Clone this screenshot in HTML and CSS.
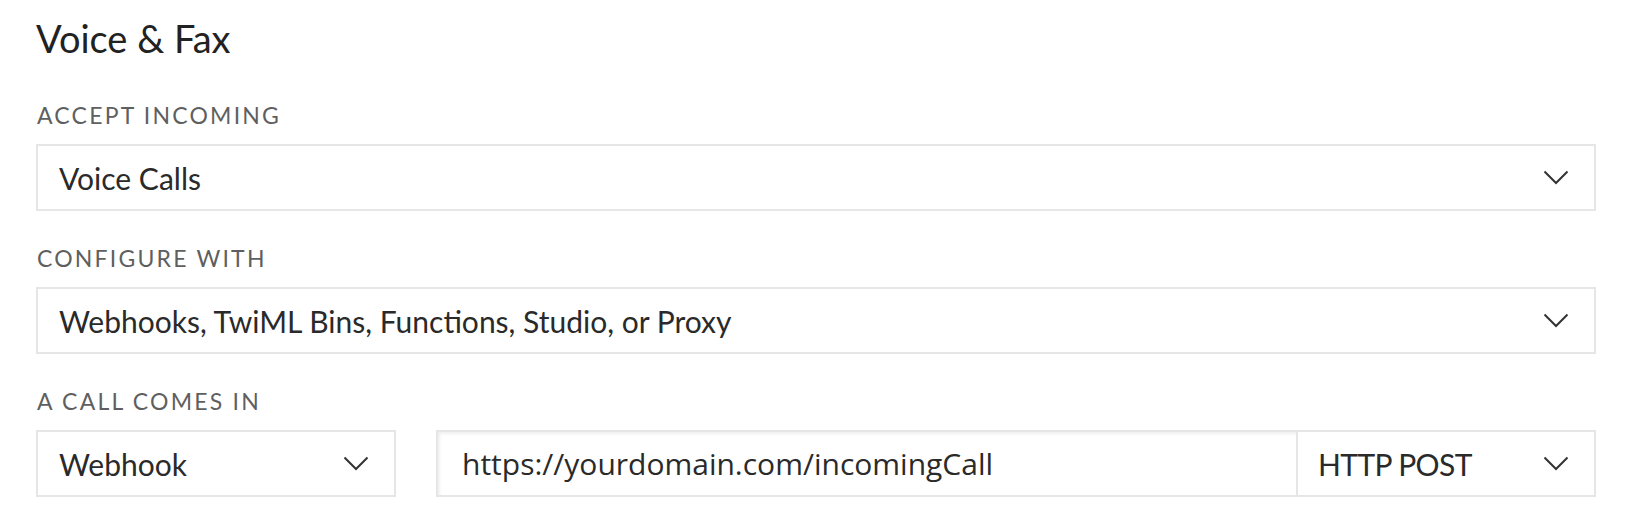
FILE: index.html
```html
<!DOCTYPE html>
<html>
<head>
<meta charset="utf-8">
<link rel="stylesheet" href="styles.css">
</head>
<body>
<div class="panel">
  <h2 class="title">Voice &amp; Fax</h2>

  <div class="field">
    <div class="label">Accept Incoming</div>
    <div class="select">
      <span class="value">Voice Calls</span>
      <svg class="chev" width="26" height="15" viewBox="0 0 26 15"><polyline points="1.5,1.5 13,13 24.5,1.5" fill="none" stroke="#333" stroke-width="2"/></svg>
    </div>
  </div>

  <div class="field">
    <div class="label">Configure With</div>
    <div class="select">
      <span class="value">Webhooks, TwiML Bins, Functions, Studio, or Proxy</span>
      <svg class="chev" width="26" height="15" viewBox="0 0 26 15"><polyline points="1.5,1.5 13,13 24.5,1.5" fill="none" stroke="#333" stroke-width="2"/></svg>
    </div>
  </div>

  <div class="field">
    <div class="label">A Call Comes In</div>
    <div class="row">
      <div class="select small">
        <span class="value">Webhook</span>
        <svg class="chev" width="26" height="15" viewBox="0 0 26 15"><polyline points="1.5,1.5 13,13 24.5,1.5" fill="none" stroke="#333" stroke-width="2"/></svg>
      </div>
      <div class="combo">
        <div class="url"><span class="url-text">https://yourdomain.com/incomingCall</span></div>
        <div class="select method">
          <span class="value tight">HTTP POST</span>
          <svg class="chev" width="26" height="15" viewBox="0 0 26 15"><polyline points="1.5,1.5 13,13 24.5,1.5" fill="none" stroke="#333" stroke-width="2"/></svg>
        </div>
      </div>
    </div>
  </div>
</div>
</body>
</html>
```

FILE: styles.css
```css
html, body {
  margin: 0;
  padding: 0;
  background: #ffffff;
}
body {
  font-family: Lato, "Open Sans", sans-serif;
  color: #282828;
}
.panel {
  width: 1560px;
  margin-left: 36px;
  padding-top: 16px;
}
.title {
  margin: 0;
  font-size: 38px;
  line-height: 44px;
  font-weight: 400;
  color: #222;
}
.field {
  margin-top: 34px;
}
.field:first-of-type {
  margin-top: 42px;
}
.label {
  font-size: 23px;
  line-height: 26px;
  text-transform: uppercase;
  letter-spacing: 2.2px;
  color: #5f5f5f;
  margin-bottom: 16px;
  padding-left: 1px;
}
.select {
  box-sizing: border-box;
  height: 67px;
  border: 2px solid #e6e6e6;
  display: flex;
  align-items: center;
  justify-content: space-between;
  padding: 0 25px 0 21px;
  background: #fff;
}
.value {
  font-size: 30px;
  color: #2a2a2a;
  white-space: nowrap;
}
.tight {
  letter-spacing: -0.6px;
}
.chev {
  display: block;
  flex: none;
}
.row {
  display: flex;
  gap: 40px;
}
.small {
  width: 360px;
}
.combo {
  flex: 1;
  display: flex;
}
.url {
  box-sizing: border-box;
  flex: 1;
  height: 67px;
  border: 2px solid #e6e6e6;
  border-right: none;
  box-shadow: inset 2px 2px 3px #f0f0f0;
  display: flex;
  align-items: center;
  padding-left: 24px;
}
.url-text {
  font-family: "Open Sans", Lato, sans-serif;
  font-size: 30px;
  color: #2a2a2a;
  white-space: nowrap;
}
.method {
  width: 300px;
  padding-left: 20px;
}
```
